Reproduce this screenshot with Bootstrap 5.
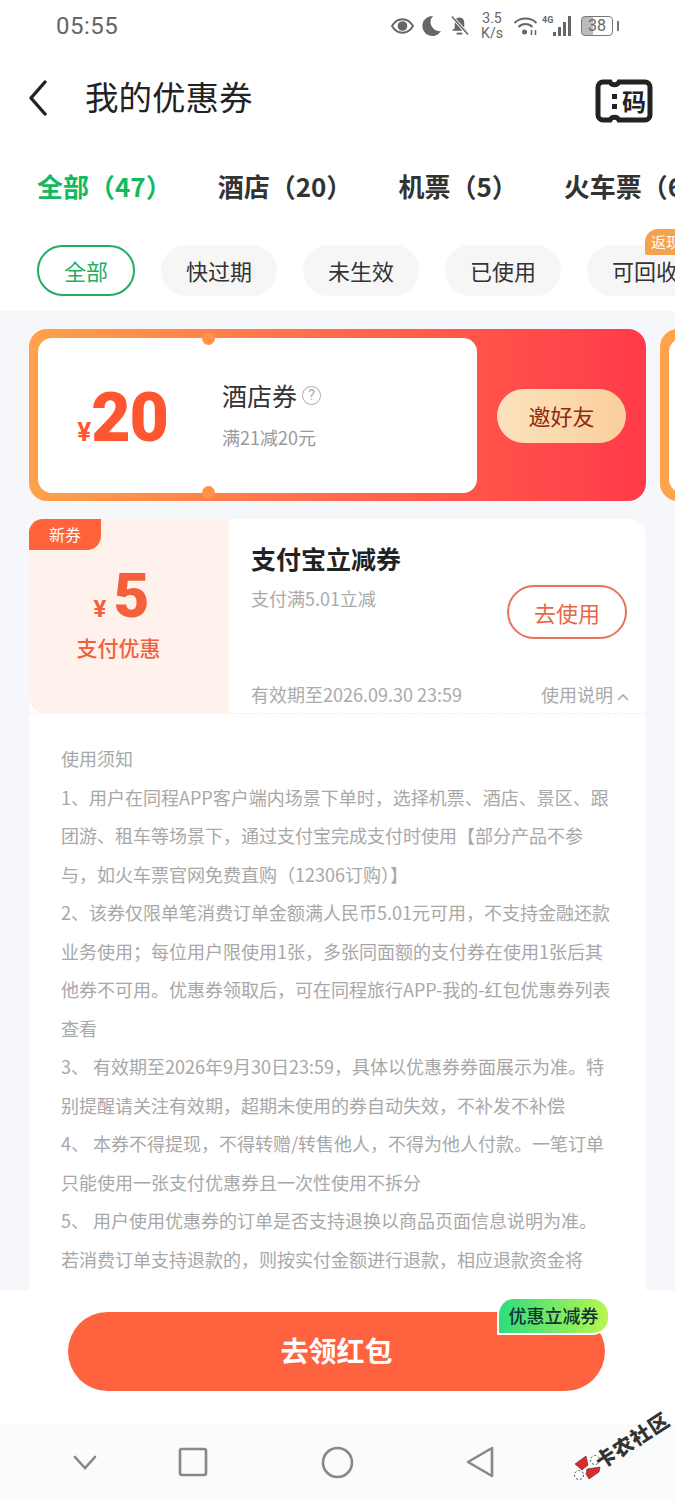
<!DOCTYPE html>
<html lang="zh-CN">
<head>
  <meta charset="UTF-8">
  <meta name="viewport" content="width=device-width, initial-scale=1.0">
  <title>我的优惠券</title>
  <link rel="stylesheet" href="https://cdn.jsdelivr.net/npm/bootstrap@5.3.0/dist/css/bootstrap.min.css">
  <style>
    body { font-family: "Noto Sans CJK SC", "Noto Sans", sans-serif; background: #fff; color: #222; }
    .phone { width: 675px; height: 1500px; overflow: hidden; }
    .status-bar { height: 52px; padding: 0 56px; color: #666; }
    .status-time { font-family: Roboto, sans-serif; font-size: 24px; letter-spacing: .5px; }
    .speed { font-family: Roboto, sans-serif; font-size: 14px; line-height: 15px; text-align: center; width: 24px; margin: 0 9px 0 11px; }
    .batt { width: 32px; height: 20px; border: 1.5px solid #777; border-radius: 4px; font: 16px/17px Roboto, sans-serif; text-align: center; background: linear-gradient(90deg, #bbb 38%, transparent 38%); margin-left: 7px; }
    .batt-tip { width: 2px; height: 10px; background: #777; margin-left: 4px; }
    .top-head { height: 92px; padding: 0 22px 0 28px; }
    .page-title { font-size: 33.5px; line-height: 1; margin: -4px 0 0 37px; color: #222; }
    .code-icon { position: relative; width: 58px; height: 44px; margin-top: 6px; }
    .code-icon svg { position: absolute; left: 0; top: 0; }
    .code-icon span { position: absolute; left: 27px; top: 8px; font-size: 24px; line-height: 28px; font-weight: 700; color: #222; }
    .tabs-row { height: 82px; padding-left: 37px; gap: 46px; font-size: 26px; font-weight: 700; white-space: nowrap; overflow: hidden; color: #333; }
    .tab-on { color: #14b85f; }
    .pills-row { height: 51px; margin-top: 19px; padding-left: 37px; gap: 26px; white-space: nowrap; }
    .chip { height: 51px; border-radius: 26px; background: #f6f6f6; font-size: 22px; line-height: 51px; padding: 0 25px; color: #333; flex: none; position: relative; }
    .chip-on { background: #fff; border: 2px solid #1fae63; color: #1fae63; line-height: 47px; width: 98px; text-align: center; }
    .chip-tag { position: absolute; top: -16px; left: 58px; width: 60px; height: 26px; border-radius: 13px 13px 13px 2px; background: #f5a24e; color: #fff; font-size: 15px; line-height: 25px; padding-left: 6px; }
    .content-area { flex: 1 1 0; min-height: 0; margin-top: 15px; background: #f6f7fb; padding: 18px 29px 0; overflow: hidden; }
    .hotel-wrap { gap: 14px; width: 700px; }
    .hotel-card { width: 617px; height: 172px; flex: none; border-radius: 18px; background: linear-gradient(90deg, #ffa24a 0%, #ff6a4b 50%, #ff3a4a 100%); padding: 9px 0 8px 9px; }
    .hotel-next { width: 60px; height: 172px; flex: none; border-radius: 18px 0 0 18px; background: #ffa24a; padding: 9px 0 8px 9px; }
    .hotel-next div { background: #fff; height: 100%; border-radius: 14px 0 0 14px; }
    .hotel-inner { width: 439px; height: 155px; background: #fff; border-radius: 14px; position: relative; }
    .notch { position: absolute; left: 164px; width: 13px; height: 13px; border-radius: 50%; background: #ff9349; }
    .notch-top { top: -6px; }
    .notch-bot { bottom: -6px; }
    .hotel-price { width: 184px; color: #ff5530; font-weight: 700; text-align: right; padding: 5px 54px 0 0; font-family: Roboto, sans-serif; }
    .hotel-price b { font-size: 68px; line-height: 1; letter-spacing: -1px; }
    .hotel-price span { font-size: 26px; }
    .hotel-name { font-size: 25px; line-height: 1.2; color: #333; }
    .hotel-sub { font-size: 18px; color: #999; margin-top: 14px; }
    .help-dot { width: 19px; height: 19px; border: 1px solid #aaa; border-radius: 50%; color: #aaa; font: 14px/17px Roboto, sans-serif; text-align: center; margin-left: 5px; }
    .invite-btn { width: 129px; height: 54px; border-radius: 27px; margin-left: 20px; border: 0; background: linear-gradient(90deg, #fbe3bd, #fbcf9c); color: #8c2b12; font-size: 22px; padding: 0; }
    .pay-card { margin-top: 18px; width: 617px; height: 195px; background: #fff; border-radius: 18px 18px 0 0; border-bottom: 1px dashed #eee; }
    .pay-left { width: 200px; height: 195px; background: #fff2ed; border-radius: 18px 0 0 18px; position: relative; color: #f2603c; padding-right: 21px; }
    .new-tag { position: absolute; top: 0; left: 0; width: 72px; height: 31px; background: #ff6339; color: #fff; font-size: 16px; line-height: 30px; text-align: center; border-radius: 14px 0 14px 0; }
    .pay-amt { margin-top: 46px; font-family: Roboto, sans-serif; font-weight: 700; line-height: 1; padding-left: 6px; }
    .pay-amt b { font-size: 62px; margin-left: 7px; }
    .pay-amt span { font-size: 24px; }
    .pay-kind { font-size: 21px; font-weight: 500; margin-top: 5px; }
    .pay-right { flex: 1; padding: 20px 20px 0 22px; position: relative; }
    .pay-title { font-size: 25px; font-weight: 700; color: #222; line-height: 38px; }
    .pay-sub { font-size: 18px; color: #aaa; margin-top: 8px; line-height: 26px; }
    .use-btn { position: absolute; right: 19px; top: 66px; width: 120px; height: 54px; border: 2px solid #ea7257; border-radius: 27px; background: #fff; color: #e8674a; font-size: 22px; padding: 0; }
    .pay-foot { position: absolute; left: 22px; right: 17px; bottom: 6px; font-size: 18px; color: #aaa; line-height: 26px; }
    .rules { width: 617px; background: #fff; padding: 25px 34px 60px 32px; font-size: 18px; line-height: 38.5px; color: #a8a8a8; }
    .bottom-bar { height: 133px; background: #fff; padding: 22px 0 0 68px; flex: none; position: relative; }
    .claim-btn { width: 537px; height: 79px; border-radius: 40px; border: 0; background: #ff623e; color: #fff; font-size: 28px; font-weight: 700; padding: 0 0 4px; }
    .claim-tag { position: absolute; left: 497px; top: 9px; width: 111px; height: 36px; border-radius: 16px 16px 16px 0; border: 2px solid #fff; border-top: 0; border-right: 0; background: linear-gradient(90deg, #2fdc7d, #b8f64e); color: #133; font-size: 18px; font-weight: 500; line-height: 32px; text-align: center; }
    .sys-nav { height: 77px; background: #fbfbfc; flex: none; position: relative; }
    .sys-nav svg { position: absolute; }
    .wm { position: absolute; left: 590px; top: 7px; width: 84px; font-size: 20px; font-weight: 900; color: #333; transform: rotate(-33deg); white-space: nowrap; line-height: 20px; letter-spacing: 1px; }
  </style>
</head>
<body>
<div class="phone d-flex flex-column">

  <div class="status-bar d-flex align-items-center justify-content-between">
    <span class="status-time">05:55</span>
    <div class="d-flex align-items-center">
      <svg width="23" height="18" viewBox="0 0 24 18"><path d="M1 9c3-5 7-7 11-7s8 2 11 7c-3 5-7 7-11 7S4 14 1 9z" fill="none" stroke="#666" stroke-width="2"/><circle cx="12" cy="9" r="5" fill="#666"/></svg>
      <svg class="ms-2" width="20" height="22" viewBox="0 0 20 22"><path d="M11 1a10 10 0 1 0 8 15A9 9 0 0 1 11 1z" fill="#666"/></svg>
      <svg class="ms-2" width="19" height="22" viewBox="0 0 20 22"><path d="M10 2c-4 0-5 3-5 6v5l-3 3h16l-3-3V8c0-3-1-6-5-6z" fill="#666"/><rect x="7" y="18" width="6" height="2" fill="#666"/><path d="M2 1l17 19" stroke="#fff" stroke-width="3.500"/><path d="M2 1l17 19" stroke="#666" stroke-width="1.600"/></svg>
      <div class="speed">3.5<br>K/s</div>
      <svg width="25" height="20" viewBox="0 0 24 20"><g fill="none" stroke="#666" stroke-width="2"><path d="M1 7c6-6 16-6 22 0"/><path d="M5 11c4-4 10-4 14 0"/></g><circle cx="11" cy="16" r="2.500" fill="#666"/><path d="M18 14v5M22 14v5" stroke="#666" stroke-width="1.500"/></svg>
      <svg class="ms-1" width="32" height="24" viewBox="0 0 32 24"><text x="0" y="9" font-size="9" font-weight="700" fill="#666" font-family="Roboto">4G</text><g fill="#666"><rect x="11" y="18" width="3" height="4"/><rect x="16" y="13" width="3" height="9"/><rect x="21" y="8" width="3" height="14"/><rect x="26" y="2" width="3" height="20"/></g></svg>
      <div class="batt">38</div><div class="batt-tip"></div>
    </div>
  </div>

  <div class="top-head d-flex align-items-center">
    <svg width="20" height="36" viewBox="0 0 20 36"><path d="M17 2L3 18l14 16" fill="none" stroke="#222" stroke-width="3.400" stroke-linecap="round" stroke-linejoin="round"/></svg>
    <div class="page-title flex-grow-1">我的优惠券</div>
    <div class="code-icon">
      <svg width="58" height="44" viewBox="0 0 58 44"><path d="M8 3h7a5 5 0 0 0 9 0h26a5 5 0 0 1 5 5v28a5 5 0 0 1-5 5H24a5 5 0 0 0-9 0H8a5 5 0 0 1-5-5V8a5 5 0 0 1 5-5z" fill="#fff" stroke="#222" stroke-width="5"/><rect x="17" y="15" width="5" height="5" fill="#222"/><rect x="17" y="25" width="5" height="5" fill="#222"/></svg>
      <span>码</span>
    </div>
  </div>

  <div class="tabs-row d-flex align-items-center">
    <span class="tab-on">全部（47）</span><span>酒店（20）</span><span>机票（5）</span><span>火车票（6）</span>
  </div>

  <div class="pills-row d-flex">
    <div class="chip chip-on">全部</div>
    <div class="chip">快过期</div>
    <div class="chip">未生效</div>
    <div class="chip">已使用</div>
    <div class="chip">可回收<span class="chip-tag">返现</span></div>
  </div>

  <div class="content-area">
    <div class="hotel-wrap d-flex">
      <div class="hotel-card d-flex align-items-center">
        <div class="hotel-inner d-flex align-items-center">
          <i class="notch notch-top"></i><i class="notch notch-bot"></i>
          <div class="hotel-price"><span>¥</span><b>20</b></div>
          <div>
            <div class="hotel-name d-flex align-items-center">酒店券<span class="help-dot">?</span></div>
            <div class="hotel-sub">满21减20元</div>
          </div>
        </div>
        <button class="invite-btn">邀好友</button>
      </div>
      <div class="hotel-next"><div></div></div>
    </div>

    <div class="pay-card d-flex">
      <div class="pay-left text-center">
        <div class="new-tag">新券</div>
        <div class="pay-amt"><span>¥</span><b>5</b></div>
        <div class="pay-kind">支付优惠</div>
      </div>
      <div class="pay-right">
        <div class="pay-title">支付宝立减券</div>
        <div class="pay-sub">支付满5.01立减</div>
        <button class="use-btn">去使用</button>
        <div class="pay-foot d-flex justify-content-between align-items-center">
          <span>有效期至2026.09.30 23:59</span>
          <span>使用说明 <svg width="12" height="8" viewBox="0 0 12 8"><path d="M1 7l5-5 5 5" fill="none" stroke="#aaa" stroke-width="1.600"/></svg></span>
        </div>
      </div>
    </div>

    <div class="rules">
      <div>使用须知</div>
      <div>1、用户在同程APP客户端内场景下单时，选择机票、酒店、景区、跟团游、租车等场景下，通过支付宝完成支付时使用【部分产品不参与，如火车票官网免费直购（12306订购）】</div>
      <div>2、该券仅限单笔消费订单金额满人民币5.01元可用，不支持金融还款业务使用；每位用户限使用1张，多张同面额的支付券在使用1张后其他券不可用。优惠券领取后，可在同程旅行APP-我的-红包优惠券列表查看</div>
      <div>3、 有效期至2026年9月30日23:59，具体以优惠券券面展示为准。特别提醒请关注有效期，超期未使用的券自动失效，不补发不补偿</div>
      <div>4、 本券不得提现，不得转赠/转售他人，不得为他人付款。一笔订单只能使用一张支付优惠券且一次性使用不拆分</div>
      <div>5、 用户使用优惠券的订单是否支持退换以商品页面信息说明为准。若消费订单支持退款的，则按实付金额进行退款，相应退款资金将</div>
    </div>
  </div>

  <div class="bottom-bar">
    <button class="claim-btn">去领红包</button>
    <div class="claim-tag">优惠立减券</div>
  </div>

  <div class="sys-nav">
    <svg style="left:72px;top:31px" width="26" height="18" viewBox="0 0 26 18"><path d="M3 3l10 11L23 3" fill="none" stroke="#888" stroke-width="2.600" stroke-linecap="round"/></svg>
    <svg style="left:178px;top:24px" width="30" height="30" viewBox="0 0 30 30"><rect x="2" y="2" width="26" height="26" rx="2" fill="none" stroke="#888" stroke-width="2.600"/></svg>
    <svg style="left:321px;top:23px" width="33" height="33" viewBox="0 0 33 33"><circle cx="16.500" cy="16.500" r="14.500" fill="none" stroke="#888" stroke-width="2.600"/></svg>
    <svg style="left:465px;top:22px" width="30" height="34" viewBox="0 0 30 34"><path d="M27 3v28L3 17z" fill="none" stroke="#888" stroke-width="2.600" stroke-linejoin="round"/></svg>
    <svg style="left:574px;top:31px" width="27" height="27" viewBox="0 0 27 27"><circle cx="5" cy="21" r="4.500" fill="#fff" stroke="#444" stroke-width="1" stroke-dasharray="2 2"/><circle cx="21" cy="6" r="4.500" fill="#fff" stroke="#444" stroke-width="1" stroke-dasharray="2 2"/><g fill="#e02a2a" stroke="#333" stroke-width=".6"><path d="M1 10l11-8 2 9-6 5z"/><path d="M13 15l13-2-1 5-10 7-3-5z"/></g></svg>
    <div class="wm">卡农社区</div>
  </div>

</div>
<script src="https://cdn.jsdelivr.net/npm/bootstrap@5.3.0/dist/js/bootstrap.bundle.min.js"></script>
</body>
</html>
